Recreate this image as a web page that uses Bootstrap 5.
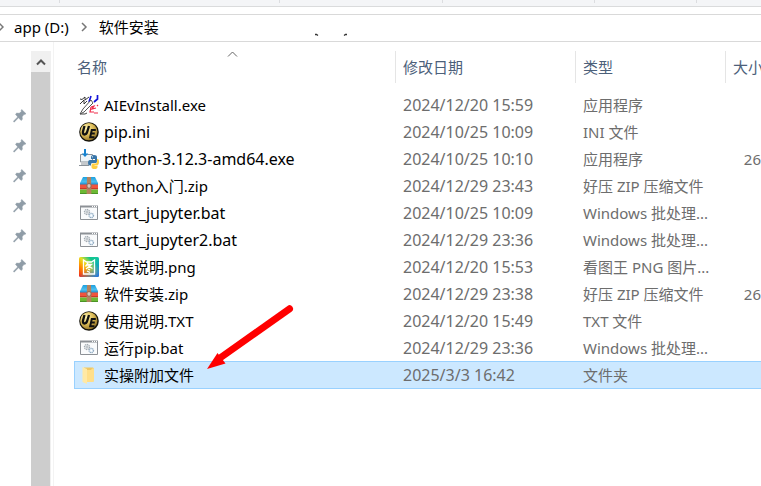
<!DOCTYPE html>
<html lang="zh-CN">
<head>
<meta charset="utf-8">
<meta name="viewport" content="width=device-width, initial-scale=1">
<title>软件安装</title>
<link rel="stylesheet" href="https://cdn.jsdelivr.net/npm/bootstrap@5.3.0/dist/css/bootstrap.min.css">
<style>
  body { font: 15px/20px "Noto Sans", "Noto Sans CJK SC", sans-serif; color: #000; background: #fff; }
  .ribbon { height: 7px; background: #f4f5f7; border-bottom: 1px solid #dadbdc; }
  .ribbon i { width: 1px; height: 3px; background: #dcdde0; position: absolute; top: 0; }
  .address { height: 28px; margin-top: 7px; padding-bottom: 2px; border: solid #d9d9d9; border-width: 1px 0; }
  .address a { color: #000; text-decoration: none; }
  .address a:first-of-type { margin-left: 10px; }
  .crumb { margin: 0 9px; }
  .remnant { position: absolute; left: 314px; top: 33px; }
  .pins { width: 31px; padding: 59px 4px 0 0; }
  .pins button { height: 30px; }
  .track { width: 20px; margin-top: 9px; background: #f0f0f0; }
  .track button { height: 21px; }
  .thumb { background: #cdcdcd; width: 19px; }
  .files { margin-left: 2px; border-left: 1px solid #f3f3f3; padding: 9px 0 0 20px; }
  .file-table { table-layout: fixed; border-collapse: separate; border-spacing: 0; width: 100%; }
  .file-table th { height: 32px; font-weight: 400; color: #4c607a; padding: 0 0 0 7px; border-left: 1px solid #e5e5e5; white-space: nowrap; }
  .file-table th:first-child { border-left: 0; padding-left: 3px; }
  .file-table tbody::before { content: ""; display: block; height: 8px; }
  .file-table td { height: 27px; padding: 0 0 0 8px; color: #6d6d6d; white-space: nowrap; overflow: hidden; }
  .file-table td:first-child { padding-left: 5px; color: #000; }
  .file-table td:nth-child(2), .file-table .latin { font-size: 16px; }
  .file-table .chosen td { height: 28px; background: #cce8ff; border: solid #99d1ff; border-width: 1px 0; }
  .file-table .chosen td:first-child { border-left-width: 1px; padding-left: 4px; }
  .file-name svg { margin-right: 5px; flex: none; }
  .sort { position: absolute; left: 153px; top: 0; }
  .pointer { position: absolute; left: 200px; top: 300px; pointer-events: none; }
</style>
<script src="https://cdn.jsdelivr.net/npm/bootstrap@5.3.0/dist/js/bootstrap.bundle.min.js"></script>
</head>
<body class="vh-100 d-flex flex-column overflow-hidden position-relative">
<svg class="position-absolute" width="0" height="0" aria-hidden="true">
  <defs>
    <linearGradient id="warm" x1="0" y1="1" x2="1" y2="0"><stop offset="0" stop-color="#f02020"/><stop offset=".3" stop-color="#ff8c00"/><stop offset=".52" stop-color="#e8e020"/><stop offset=".75" stop-color="#12c48c"/><stop offset="1" stop-color="#12c8a0"/></linearGradient>
    <linearGradient id="cool" x1="0" y1="0" x2="1" y2="1"><stop offset=".45" stop-color="#0090ff" stop-opacity="0"/><stop offset="1" stop-color="#1468f0"/></linearGradient>
    <linearGradient id="lid" x1="0" y1="0" x2="0" y2="1"><stop offset="0" stop-color="#1fa0de"/><stop offset=".6" stop-color="#4cc0f0"/><stop offset="1" stop-color="#1680c4"/></linearGradient>
    <radialGradient id="gold" cx=".35" cy=".3" r=".8"><stop offset="0" stop-color="#fff3b0"/><stop offset=".5" stop-color="#dcbc58"/><stop offset="1" stop-color="#8a6a20"/></radialGradient>
  </defs>
  <symbol id="pin" viewBox="0 0 14 14"><path d="M8.700.5 13 4.700l-1.300.8-.6-.2-2 2.500.3 2.500-1.300 1.200-2.600-2.700L1.400 12.900.7 12.900V12l4-4.100L2.500 5.200l1.200-1.100 2.500.2L8.400 2.600l-.3-1z" fill="#8f9ca7" stroke="#8f9ca7" stroke-width=".5"/></symbol>
  <symbol id="pen" viewBox="0 0 20 20"><path d="M1 4l2 .5L6 2v3l4-3M1 9l4-4v4l3-3" fill="none" stroke="#222" stroke-width=".9"/><path d="M13 0h5v5l-4 2-2-2z" fill="#fff"/><path d="M18.500 0v4L15 7M12 1l-2 6" fill="none" stroke="#1414d8" stroke-width="1.700"/><path d="M12 5 4 14l-3 5 4-2 9-9z" fill="#fff" stroke="#555" stroke-width="1"/><path d="M1 19h5l2-1" fill="none" stroke="#444"/><path d="m12 12 3-1-2 3 4-1M12 12l-1 5h4m3-6 1-1m-4 8h4" fill="none" stroke="#ef2848" stroke-width="1.200"/></symbol>
  <symbol id="edit" viewBox="0 0 20 20"><circle cx="10" cy="10" r="9.800" fill="#14120a"/><circle cx="9.800" cy="9.700" r="8.600" fill="url(#gold)"/><path d="M5.500 4 4 9.500q-.5 3 1.500 3 2 0 2.800-3L10 4" fill="none" stroke="#111" stroke-width="2.300"/><path d="M16.800 8h-4l-1.600 7.300h4.300M12.300 11.600h3.500" fill="none" stroke="#111" stroke-width="2"/></symbol>
  <symbol id="python" viewBox="0 0 20 20"><path d="M1.500 5.500h12v7.500h-12z" fill="#eef5f9" stroke="#8a9299"/><path d="M0 16.500h10M2 15h8" stroke="#8a9299"/><path d="M5 0h2v4.500h2.300L6 8 2.700 4.500H5z" fill="#1683d0"/><path d="M15 6q-3 0-3 2v2h4v1h-5q-2 0-2 3 0 2.500 2 2.500h1V15q0-1 2-1h3q1 0 1-2V8q0-2-3-2" fill="#3976a9"/><path d="M18 10v3q0 1.500-2 1.500h-2q-1.500 0-1.500 2v1.500q0 2 3 2t3-2V17h-3v-.5h3q1.500-.5 1.500-3.500 0-3-1.500-3z" fill="#ffce42"/><circle cx="13.500" cy="7.800" r=".6" fill="#fff"/></symbol>
  <symbol id="zip" viewBox="0 0 20 20"><path d="M4 1h12l3 6v2H1V7z" fill="url(#lid)"/><path d="M1 8.500h18V13H1z" fill="#f0543e"/><path d="M1 12h18v1.500H1z" fill="#c93a28"/><path d="M1 13.500h18V18H1z" fill="#6cb934"/><path d="M1 17h18v1H1z" fill="#4b9427"/><path d="M8 1h4l.4 17H7.600z" fill="#b5835e"/><circle cx="10" cy="9.800" r="2.400" fill="#c5a18c" stroke="#8d6250" stroke-width=".8"/><path d="M10 8.500v3" stroke="#eee"/></symbol>
  <symbol id="batch" viewBox="0 0 20 20"><path d="M1.500 3.500h17v13h-17z" fill="#fafbfc" stroke="#8d9196"/><path d="M1 3.500h18" stroke="#8d9196" stroke-width="2"/><path d="M13 3.500h1m1 0h1m1 0h1" stroke="#fff"/><circle cx="8" cy="9" r="2.500" fill="#f2f4f6" stroke="#a2aab1" stroke-width="1.400" stroke-dasharray="1.300 .6"/><circle cx="8" cy="9" r=".9" fill="#fff" stroke="#8b959d" stroke-width=".6"/><circle cx="12.300" cy="12.500" r="2.200" fill="#e4f0fa" stroke="#93abc0" stroke-width="1.300" stroke-dasharray="1.200 .5"/><circle cx="12.300" cy="12.500" r=".8" fill="#fff"/></symbol>
  <symbol id="image" viewBox="0 0 20 20"><rect width="20" height="20" rx="1.500" fill="url(#warm)"/><rect width="20" height="20" rx="1.500" fill="url(#cool)"/><path d="M4.500 17V3l3 2h5l3-2v14zM9 6 6.500 9.500M8 7.500h4.500L7 12M8.500 8.500l5 3M9 12l2 1m-3 1 3 1.500" fill="none" stroke="#fff" stroke-width="1.300"/></symbol>
  <symbol id="folder" viewBox="0 0 20 20"><path d="M5 2.500h9l1 1V16l-2 1H5z" fill="#eec765"/><path d="M8 5h4l1-1.500h2V16l-1 1H8z" fill="#ffdf8a"/><path d="M3.500 2 8 4v15l-4.500-2z" fill="#ffe9a6"/></symbol>
</svg>

<div class="ribbon flex-shrink-0" aria-hidden="true">
  <i style="left:59px"></i><i style="left:279px"></i><i style="left:442px"></i><i style="left:594px"></i><i style="left:696px"></i>
</div>
<nav class="address d-flex align-items-center flex-shrink-0" aria-label="路径">
  <svg width="4" height="10" viewBox="0 0 4 10"><path d="M-1 1l4 4-4 4" fill="none" stroke="#777" stroke-width="1.500"/></svg>
  <a href="#">app (D:)</a>
  <svg class="crumb" width="12" height="10" viewBox="0 0 12 10"><path d="M4 1l4 4-4 4" fill="none" stroke="#777" stroke-width="1.500"/></svg>
  <a href="#">软件安装</a>
</nav>
<svg class="remnant" width="36" height="4" viewBox="0 0 36 4" aria-hidden="true"><path d="M1 1.500h1.500l1.500 1M33 1.500h-1.500l-1.500 1" fill="none" stroke="#333" stroke-width="1.300"/></svg>

<main class="d-flex flex-grow-1">
  <aside class="pins d-flex flex-column align-items-end flex-shrink-0" aria-label="固定项">
    <button class="btn p-0 border-0 d-flex align-items-center" aria-label="取消固定 1"><svg width="14" height="14"><use href="#pin"/></svg></button>
    <button class="btn p-0 border-0 d-flex align-items-center" aria-label="取消固定 2"><svg width="14" height="14"><use href="#pin"/></svg></button>
    <button class="btn p-0 border-0 d-flex align-items-center" aria-label="取消固定 3"><svg width="14" height="14"><use href="#pin"/></svg></button>
    <button class="btn p-0 border-0 d-flex align-items-center" aria-label="取消固定 4"><svg width="14" height="14"><use href="#pin"/></svg></button>
    <button class="btn p-0 border-0 d-flex align-items-center" aria-label="取消固定 5"><svg width="14" height="14"><use href="#pin"/></svg></button>
    <button class="btn p-0 border-0 d-flex align-items-center" aria-label="取消固定 6"><svg width="14" height="14"><use href="#pin"/></svg></button>
  </aside>
  <div class="track d-flex flex-column flex-shrink-0">
    <button class="btn p-0 border-0 rounded-0 d-flex align-items-center justify-content-center" aria-label="向上滚动"><svg width="12" height="8" viewBox="0 0 12 8"><path d="M2 6.500 6 2.500l4 4" fill="none" stroke="#555" stroke-width="2"/></svg></button>
    <div class="thumb flex-grow-1"></div>
  </div>
  <section class="files flex-grow-1 overflow-hidden">
    <table class="file-table">
      <colgroup><col style="width:321px"><col style="width:180px"><col style="width:150px"><col></colgroup>
      <thead><tr>
        <th class="position-relative" scope="col">名称<svg class="sort" width="11" height="7" viewBox="0 0 11 7"><path d="M1 5.500 5.500 1 10 5.500" fill="none" stroke="#666"/></svg></th>
        <th scope="col">修改日期</th><th scope="col">类型</th><th class="overflow-hidden" scope="col">大小</th>
      </tr></thead>
      <tbody>
        <tr><td><div class="file-name d-flex align-items-center"><svg width="20" height="20"><use href="#pen"/></svg>AIEvInstall.exe</div></td><td>2024/12/20 15:59</td><td>应用程序</td><td></td></tr>
        <tr><td class="latin"><div class="file-name d-flex align-items-center"><svg width="20" height="20"><use href="#edit"/></svg>pip.ini</div></td><td>2024/10/25 10:09</td><td>INI 文件</td><td></td></tr>
        <tr><td class="latin"><div class="file-name d-flex align-items-center"><svg width="20" height="20"><use href="#python"/></svg>python-3.12.3-amd64.exe</div></td><td>2024/10/25 10:10</td><td>应用程序</td><td class="text-end">26</td></tr>
        <tr><td><div class="file-name d-flex align-items-center"><svg width="20" height="20"><use href="#zip"/></svg>Python入门.zip</div></td><td>2024/12/29 23:43</td><td>好压 ZIP 压缩文件</td><td></td></tr>
        <tr><td class="latin"><div class="file-name d-flex align-items-center"><svg width="20" height="20"><use href="#batch"/></svg>start_jupyter.bat</div></td><td>2024/10/25 10:09</td><td>Windows 批处理...</td><td></td></tr>
        <tr><td class="latin"><div class="file-name d-flex align-items-center"><svg width="20" height="20"><use href="#batch"/></svg>start_jupyter2.bat</div></td><td>2024/12/29 23:36</td><td>Windows 批处理...</td><td></td></tr>
        <tr><td><div class="file-name d-flex align-items-center"><svg width="20" height="20"><use href="#image"/></svg>安装说明.png</div></td><td>2024/12/20 15:53</td><td>看图王 PNG 图片...</td><td></td></tr>
        <tr><td><div class="file-name d-flex align-items-center"><svg width="20" height="20"><use href="#zip"/></svg>软件安装.zip</div></td><td>2024/12/29 23:38</td><td>好压 ZIP 压缩文件</td><td class="text-end">26</td></tr>
        <tr><td><div class="file-name d-flex align-items-center"><svg width="20" height="20"><use href="#edit"/></svg>使用说明.TXT</div></td><td>2024/12/20 15:49</td><td>TXT 文件</td><td></td></tr>
        <tr><td><div class="file-name d-flex align-items-center"><svg width="20" height="20"><use href="#batch"/></svg>运行pip.bat</div></td><td>2024/12/29 23:36</td><td>Windows 批处理...</td><td></td></tr>
        <tr class="chosen" aria-selected="true"><td><div class="file-name d-flex align-items-center"><svg width="20" height="20"><use href="#folder"/></svg>实操附加文件</div></td><td>2025/3/3 16:42</td><td>文件夹</td><td></td></tr>
      </tbody>
    </table>
  </section>
</main>
<svg class="pointer" width="100" height="76" viewBox="0 0 100 76" aria-hidden="true"><path d="M89.500 8.800 20 58" stroke="#f00" stroke-width="7" stroke-linecap="round"/><path d="M7 69 17.500 53l8 10.500z" fill="#f00"/></svg>
</body>
</html>
